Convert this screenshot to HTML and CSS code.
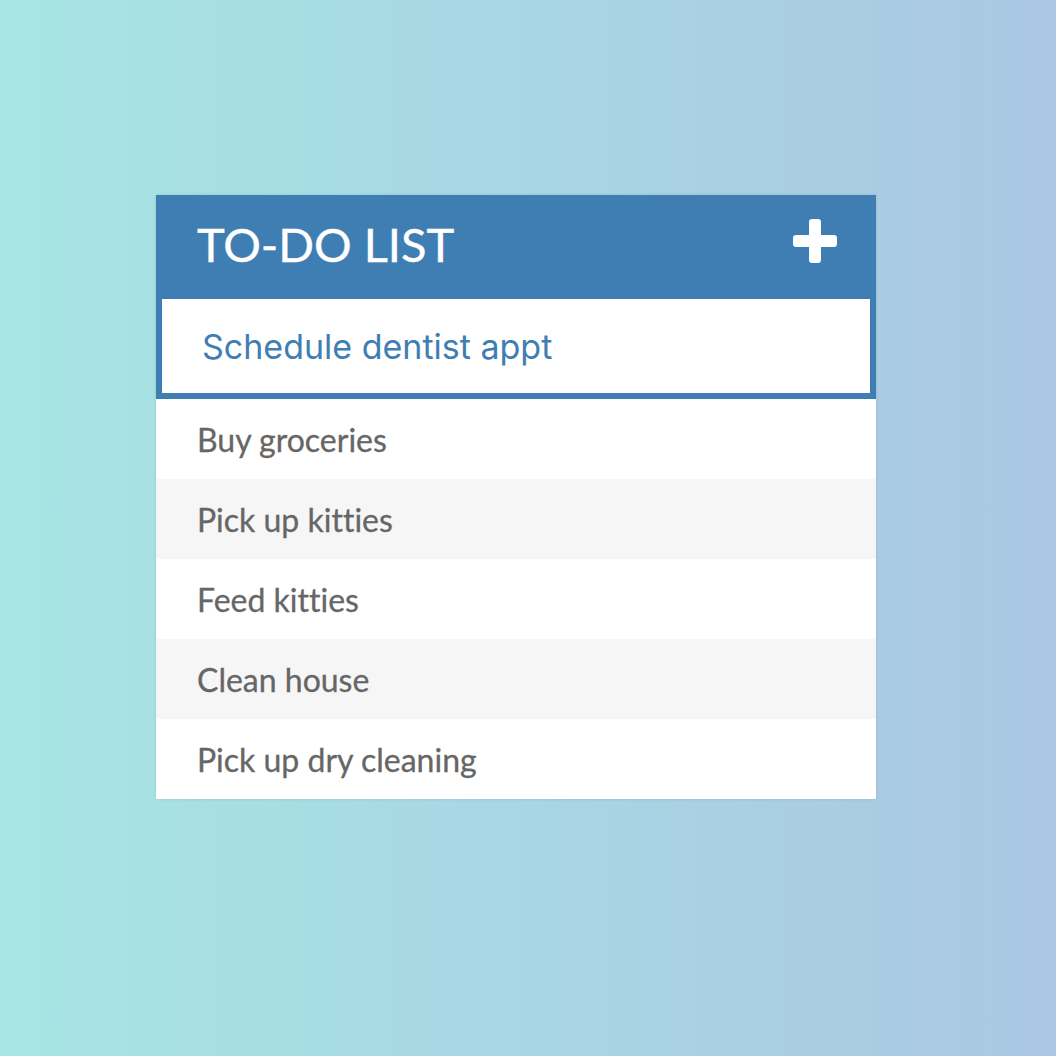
FILE: index.html
```html
<!DOCTYPE html>
<html>
<head>
<meta charset="utf-8">
<link rel="stylesheet" href="styles.css">
</head>
<body>
<div class="page">
  <div class="card">
    <div class="header">
      <h1 class="title">TO-DO LIST</h1>
      <svg class="plus" width="44" height="44" viewBox="0 0 44 44">
        <rect x="16" y="0" width="12" height="44" rx="3" fill="#fff"/>
        <rect x="0" y="16" width="44" height="12" rx="3" fill="#fff"/>
      </svg>
    </div>
    <div class="input-wrap">
      <input class="new-item" type="text" value="Schedule dentist appt">
    </div>
    <ul class="list">
      <li class="item">Buy groceries</li>
      <li class="item">Pick up kitties</li>
      <li class="item">Feed kitties</li>
      <li class="item">Clean house</li>
      <li class="item">Pick up dry cleaning</li>
    </ul>
  </div>
</div>
</body>
</html>
```
FILE: styles.css
```css
html, body {
  margin: 0;
  padding: 0;
  height: 100%;
}
body {
  background: linear-gradient(to right, #a7e5e4, #aac7e3);
  font-family: Lato, "Noto Sans", sans-serif;
  font-variant-ligatures: none;
}
.page {
  padding: 195px 0 0 156px;
}
.card {
  width: 720px;
  background: #fff;
  box-shadow: 0 0 3px rgba(0, 0, 0, 0.12);
}
.header {
  background: #3f7eb3;
  height: 98px;
  display: flex;
  align-items: center;
  justify-content: space-between;
  padding: 0 39px 0 41px;
  box-sizing: border-box;
}
.title {
  margin: 0;
  color: #fff;
  font-weight: 400;
  font-size: 47px;
  -webkit-text-stroke: 0.4px #fff;
}
.plus {
  display: block;
  margin-top: -6px;
}
.input-wrap {
  border: 6px solid #3f7eb3;
  background: #fff;
}
.new-item {
  display: block;
  width: 100%;
  box-sizing: border-box;
  height: 94px;
  border: 0;
  outline: none;
  padding: 0 0 0 40px;
  font-family: Inter, "Liberation Sans", sans-serif;
  font-size: 34px;
  color: #3f7eb3;
  background: #fff;
}
.list {
  list-style: none;
  margin: 0;
  padding: 0;
}
.item {
  height: 80px;
  display: flex;
  align-items: center;
  padding-left: 41px;
  font-size: 32px;
  color: #666;
  -webkit-text-stroke: 0.3px #666;
}
.item:nth-child(even) {
  background: #f6f6f6;
}
```
